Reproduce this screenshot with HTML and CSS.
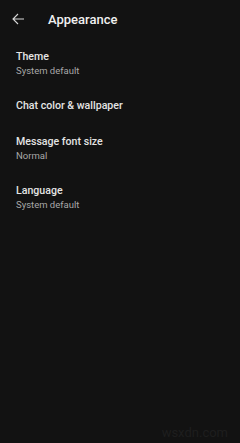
FILE: index.html
```html
<!DOCTYPE html>
<html lang="en">
<head>
    <meta charset="UTF-8">
    <meta name="viewport" content="width=device-width, initial-scale=1.0">
    <title>Appearance</title>
    <link rel="stylesheet" href="styles.css">
</head>
<body>
    <div class="screen">
        <header class="toolbar">
            <svg class="back" width="14" height="14" viewBox="0 0 14 14">
                <path d="M13 7H2M7 2L2 7l5 5" fill="none" stroke="#d8d8d8" stroke-width="1.1"/>
            </svg>
            <h1>Appearance</h1>
        </header>

        <div class="list">
            <div class="item">
                <div class="title">Theme</div>
                <div class="sub">System default</div>
            </div>
            <div class="item">
                <div class="title">Chat color &amp; wallpaper</div>
            </div>
            <div class="item">
                <div class="title">Message font size</div>
                <div class="sub">Normal</div>
            </div>
            <div class="item">
                <div class="title">Language</div>
                <div class="sub">System default</div>
            </div>
        </div>

        <div class="watermark">wsxdn.com</div>
    </div>
</body>
</html>
```

FILE: styles.css
```css
body {
    margin: 0;
    background-color: #121212;
    font-family: Roboto, "Noto Sans", sans-serif;
    color: #e8e8e8;
}

.screen {
    height: 443px;
    display: flex;
    flex-direction: column;
    position: relative;
}

.toolbar {
    height: 38px;
    display: flex;
    align-items: center;
    padding-left: 11px;
}

.back {
    margin-right: 23px;
}

.toolbar h1 {
    margin: 0;
    font-size: 13px;
    font-weight: 500;
    color: #f0f0f0;
}

.list {
    padding-top: 1px;
}

.item {
    padding: 11px 16px;
}

.title {
    font-size: 10.6px;
    font-weight: 500;
    line-height: 14px;
    color: #e4e4e4;
}

.sub {
    font-size: 9.5px;
    line-height: 13px;
    color: #a8a8a8;
}

.watermark {
    position: absolute;
    right: 12px;
    bottom: 3px;
    font-size: 13px;
    color: #1e1e1e;
}
```
